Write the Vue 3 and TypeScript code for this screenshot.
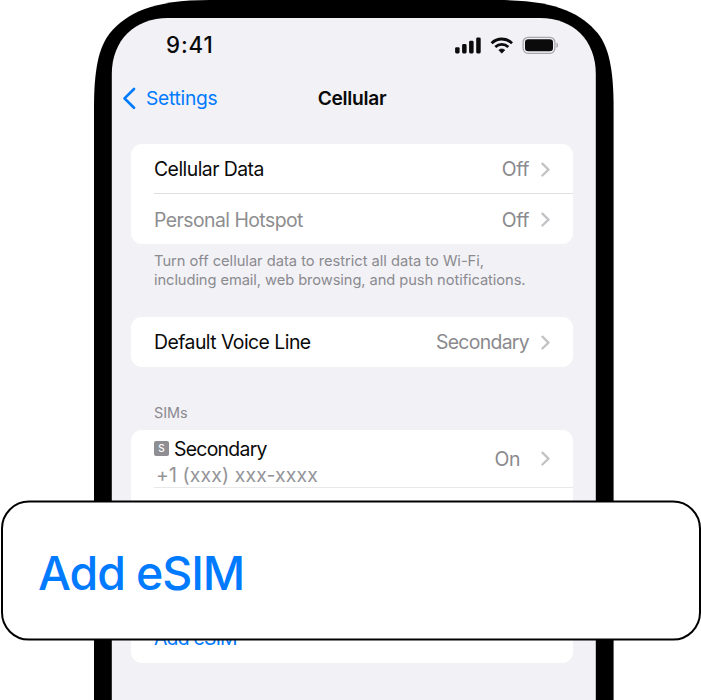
<script setup lang="ts">
interface Row {
  label: string
  value: string
  kind: string
}

const dataRows: Row[] = [
  { label: 'Cellular Data', value: 'Off', kind: 'data' },
  { label: 'Personal Hotspot', value: 'Off', kind: 'hotspot' },
]
const chevron = 'M1.4 1.7 7.5 7.6 1.4 13.5'
</script>

<template>
  <main class="stage">
    <svg class="frame" width="701" height="700" viewBox="0 0 701 700" aria-hidden="true">
      <path d="M94 700V108C94 72 98 48 110 33C127 13 152 0 210 0H497.6C555.6 0 580.6 13 597.6 33C609.6 48 613.6 72 613.6 108V700Z" fill="#000" />
      <path d="M111.8 700V74C111.8 40 135 18 168 18H540C573 18 595.8 40 595.8 74V700Z" fill="#f2f1f6" />
    </svg>

    <section class="screen">
      <header class="status">
        <span class="time">9:41</span>
        <span class="icons">
          <svg width="104" height="20" viewBox="0 0 104 20" aria-hidden="true">
            <g fill="#0b0b0c">
              <rect x="0.1" y="11.2" width="4.5" height="6.2" rx="1.3" />
              <rect x="7.1" y="8.1" width="4.5" height="9.3" rx="1.3" />
              <rect x="14.1" y="4.7" width="4.5" height="12.7" rx="1.3" />
              <rect x="21.2" y="1.4" width="4.5" height="16" rx="1.3" />
            </g>
            <g fill="none" stroke="#0b0b0c" stroke-width="2.8">
              <path d="M36.6 7.2C42.2 1.6 51.4 1.6 57 7.2" />
              <path d="M40.3 11C44 7.5 49.6 7.5 53.3 11" />
            </g>
            <path d="M43.8 14.1C45.6 12.6 48 12.6 49.8 14.1L46.8 17.2Z" fill="#0b0b0c" stroke="#0b0b0c" stroke-width=".7" stroke-linejoin="round" />
            <rect x="68.1" y="1.3" width="31.8" height="16" rx="5" fill="none" stroke="#a6a6ab" stroke-width="1.3" />
            <rect x="70" y="3.3" width="28" height="12" rx="3.3" fill="#0b0b0c" />
            <path d="M101.5 6.5C103.5 7.2 103.5 11.3 101.5 12Z" fill="#a6a6ab" />
          </svg>
        </span>
      </header>

      <nav class="nav">
        <a class="back">
          <svg width="14" height="23" viewBox="0 0 14 23" aria-hidden="true">
            <path d="M12 2 2.5 11.4 12 20.8" fill="none" stroke="#007aff" stroke-width="2.7" stroke-linecap="round" stroke-linejoin="round" />
          </svg>
          <span class="back-label">Settings</span>
        </a>
        <h1 class="title">Cellular</h1>
      </nav>

      <div class="card data-card">
        <div v-for="row in dataRows" :key="row.label" class="row" :class="row.kind">
          <span class="label">{{ row.label }}</span>
          <span class="value off">{{ row.value }}</span>
          <svg class="chevron" width="9" height="15" viewBox="0 0 9 15"><path :d="chevron" /></svg>
        </div>
      </div>
      <p class="note">
        <span class="n1">Turn off cellular data to restrict all data to Wi-Fi,</span><br />
        <span class="n2">including email, web browsing, and push notifications.</span>
      </p>

      <div class="card voice-card">
        <div class="row voice">
          <span class="label">Default Voice Line</span>
          <span class="value second">Secondary</span>
          <svg class="chevron" width="9" height="15" viewBox="0 0 9 15"><path :d="chevron" /></svg>
        </div>
      </div>

      <h2 class="group">SIMs</h2>
      <div class="card sim-card">
        <div class="sim">
          <div class="sim-text">
            <div class="sim-name"><span class="badge">S</span><span class="name">Secondary</span></div>
            <div class="phone">+1 (xxx) xxx-xxxx</div>
          </div>
          <span class="value on">On</span>
          <svg class="chevron" width="9" height="15" viewBox="0 0 9 15"><path :d="chevron" /></svg>
        </div>
        <a class="add">Add eSIM</a>
      </div>
    </section>

    <aside class="callout">
      <svg class="outline" width="701" height="142" viewBox="0 0 701 142" aria-hidden="true">
        <rect x="2" y="1.6" width="698" height="138" rx="27" fill="#fff" stroke="#000" stroke-width="2" />
      </svg>
      <span class="callout-text">Add eSIM</span>
    </aside>
  </main>
</template>

<style>
body {
  margin: 0;
  background: #fff;
}
</style>

<style scoped>
.stage {
  position: relative;
  width: 701px;
  height: 700px;
  overflow: hidden;
  font-family: Inter, "Liberation Sans", sans-serif;
  color: #0a0a0a;
}
.stage svg {
  display: block;
  flex: none;
}
.frame {
  position: absolute;
  inset: 0;
}
.screen {
  position: relative;
  box-sizing: border-box;
  width: 484px;
  height: 700px;
  margin-left: 112px;
  padding: 18px 23px 0 19px;
  white-space: nowrap;
}
.status {
  display: flex;
  justify-content: space-between;
  height: 54px;
  padding: 0 14px 0 35px;
}
.time {
  font-size: 22.3px;
  line-height: 54px;
  font-weight: 550;
  letter-spacing: 0.9px;
}
.icons {
  padding-top: 18px;
}
.nav {
  display: grid;
  grid-template-columns: 1fr auto 1fr;
  align-items: center;
  height: 52px;
  margin-left: -9px;
  margin-right: -9px;
}
.back {
  display: flex;
  align-items: center;
  gap: 10px;
  color: #007aff;
  font-size: 19.2px;
  letter-spacing: -0.25px;
}
.title {
  margin: 0;
  font-size: 19.2px;
  font-weight: 600;
  letter-spacing: -0.3px;
}
.card {
  background: #fff;
  border-radius: 11px;
  overflow: hidden;
}
.data-card {
  margin-top: 20px;
}
.row {
  display: flex;
  align-items: center;
  height: 50px;
  margin-left: 23px;
  padding-right: 23px;
  font-size: 19.4px;
}
.row.data {
  box-sizing: border-box;
  padding-top: 1px;
  border-bottom: 1px solid #e0e0e2;
}
.row.hotspot {
  box-sizing: border-box;
  padding-top: 1px;
}
.hotspot .label {
  color: #8e8e90;
}
.label {
  flex: 1;
  letter-spacing: -0.54px;
}
.value {
  margin-right: 12px;
  color: #8a8a8e;
  letter-spacing: -0.4px;
}
.second {
  letter-spacing: -0.68px;
}
.chevron path {
  fill: none;
  stroke: #c3c3c6;
  stroke-width: 2.3;
  stroke-linecap: round;
  stroke-linejoin: round;
}
.note {
  margin: 8px 0 0 23px;
  height: 65px;
  font-size: 14.7px;
  line-height: 18.5px;
  color: #8a8a8f;
}
.n1 {
  letter-spacing: -0.02px;
}
.n2 {
  letter-spacing: -0.08px;
}
.group {
  margin: 36px 0 7px 23px;
  height: 20px;
  font-size: 14.4px;
  line-height: 20px;
  font-weight: 400;
  color: #8a8a8f;
}
.sim-card {
  height: 232.6px;
}
.sim {
  display: flex;
  align-items: center;
  height: 57px;
  margin-left: 23px;
  padding-right: 23px;
  border-bottom: 1px solid #e8e8ea;
  font-size: 19.4px;
}
.sim-text {
  flex: 1;
}
.sim-name {
  display: flex;
  align-items: center;
  gap: 5px;
  height: 28px;
  padding-top: 5px;
}
.name {
  letter-spacing: -0.72px;
}
.badge {
  width: 15px;
  height: 15px;
  margin-top: -1px;
  border-radius: 2px;
  background: #8e8e93;
  color: #fff;
  font-size: 10px;
  font-weight: 500;
  line-height: 15px;
  text-align: center;
}
.phone {
  height: 25px;
  line-height: 25px;
  padding-left: 2px;
  letter-spacing: 0.13px;
  color: #949498;
}
.on {
  margin-right: 21px;
}
.add {
  display: block;
  margin: 138px 0 0 23px;
  font-size: 19.4px;
  line-height: 24px;
  letter-spacing: -0.78px;
  color: #007aff;
}
.callout {
  position: absolute;
  left: 0;
  top: 500px;
  width: 701px;
  height: 142px;
  display: flex;
  align-items: center;
}
.outline {
  position: absolute;
  inset: 0;
}
.callout-text {
  position: relative;
  margin: 3px 0 0 38px;
  font-size: 46.5px;
  line-height: 56px;
  font-weight: 500;
  letter-spacing: -1.1px;
  color: #007aff;
}
</style>
